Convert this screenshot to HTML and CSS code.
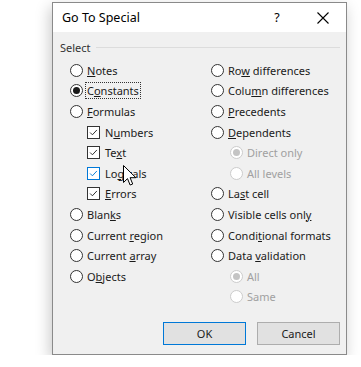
FILE: index.html
```html
<!DOCTYPE html>
<html lang="en">
<head>
    <meta charset="UTF-8">
    <meta name="viewport" content="width=device-width, initial-scale=1.0">
    <title>Go To Special</title>
    <link rel="stylesheet" href="styles.css">
</head>
<body>

    <div class="dialog">
        <div class="title-bar">
            <span class="title">Go To Special</span>
            <span class="help">?</span>
            <span class="close">
                <svg width="12" height="12" viewBox="0 0 12 12"><path d="M0.5 0.5 L11.5 11.5 M11.5 0.5 L0.5 11.5" stroke="#000" stroke-width="1.1" fill="none"/></svg>
            </span>
        </div>

        <div class="dialog-body">
            <div class="group-label"><span>Select</span><span class="group-line"></span></div>

            <div class="columns">
                <div class="column">
                    <div class="row"><span class="radio"></span><span><u>N</u>otes</span></div>
                    <div class="row"><span class="radio checked"></span><span class="focus">C<u>o</u>nstants</span></div>
                    <div class="row"><span class="radio"></span><span><u>F</u>ormulas</span></div>
                    <div class="row sub-check"><span class="check"><svg viewBox="0 0 13 13"><path d="M2.5 6.5 L5.2 9.2 L10.5 3.5" stroke="#222" stroke-width="1.1" fill="none"/></svg></span><span>N<u>u</u>mbers</span></div>
                    <div class="row sub-check"><span class="check"><svg viewBox="0 0 13 13"><path d="M2.5 6.5 L5.2 9.2 L10.5 3.5" stroke="#222" stroke-width="1.1" fill="none"/></svg></span><span>Te<u>x</u>t</span></div>
                    <div class="row sub-check"><span class="check hover"><svg viewBox="0 0 13 13"><path d="M2.5 6.5 L5.2 9.2 L10.5 3.5" stroke="#0078d7" stroke-width="1.1" fill="none"/></svg></span><span>Lo<u>g</u>icals</span></div>
                    <div class="row sub-check"><span class="check"><svg viewBox="0 0 13 13"><path d="M2.5 6.5 L5.2 9.2 L10.5 3.5" stroke="#222" stroke-width="1.1" fill="none"/></svg></span><span><u>E</u>rrors</span></div>
                    <div class="row"><span class="radio"></span><span>Blan<u>k</u>s</span></div>
                    <div class="row"><span class="radio"></span><span>Current <u>r</u>egion</span></div>
                    <div class="row"><span class="radio"></span><span>Current <u>a</u>rray</span></div>
                    <div class="row"><span class="radio"></span><span>O<u>b</u>jects</span></div>
                </div>

                <div class="column">
                    <div class="row"><span class="radio"></span><span>Ro<u>w</u> differences</span></div>
                    <div class="row"><span class="radio"></span><span>Colu<u>m</u>n differences</span></div>
                    <div class="row"><span class="radio"></span><span><u>P</u>recedents</span></div>
                    <div class="row"><span class="radio"></span><span><u>D</u>ependents</span></div>
                    <div class="row sub-radio disabled"><span class="radio checked"></span><span>Direct only</span></div>
                    <div class="row sub-radio disabled"><span class="radio"></span><span>All levels</span></div>
                    <div class="row"><span class="radio"></span><span>La<u>s</u>t cell</span></div>
                    <div class="row"><span class="radio"></span><span>Visible cells onl<u>y</u></span></div>
                    <div class="row"><span class="radio"></span><span>Condi<u>t</u>ional formats</span></div>
                    <div class="row"><span class="radio"></span><span>Data <u>v</u>alidation</span></div>
                    <div class="row sub-radio disabled"><span class="radio checked"></span><span>All</span></div>
                    <div class="row sub-radio disabled"><span class="radio"></span><span>Same</span></div>
                </div>
            </div>

            <div class="buttons">
                <button class="btn default">OK</button>
                <button class="btn">Cancel</button>
            </div>
        </div>

        <svg class="cursor" width="14" height="22" viewBox="0 0 14 22">
            <path d="M0.5 0.5 L0.5 17.5 L4.5 13.6 L7.1 20 L9.7 19 L7.1 12.7 L12.8 12.7 Z" fill="#fff" stroke="#000" stroke-width="1" stroke-linejoin="round"/>
        </svg>
    </div>

</body>
</html>
```

FILE: styles.css
```css
body {
    margin: 0;
    background-color: #ffffff;
    font-family: "Noto Sans", "Open Sans", sans-serif;
    font-size: 11px;
    color: #1a1a1a;
}

.dialog {
    position: relative;
    margin: 2px 0 0 52px;
    width: 295px;
    height: 353px;
    box-sizing: border-box;
    border: 1px solid #8a8a8a;
    background-color: #f0f0f0;
    box-shadow: -2px 5px 14px rgba(0,0,0,0.22);
    display: flex;
    flex-direction: column;
}

.title-bar {
    height: 29px;
    background-color: #ffffff;
    display: flex;
    align-items: center;
    padding-left: 9px;
}

.title {
    font-size: 12.5px;
    flex: 1;
    color: #000;
    padding-bottom: 1px;
}

.help {
    font-size: 12.5px;
    width: 46px;
    text-align: center;
    color: #000;
}

.close {
    width: 46px;
    display: flex;
    justify-content: center;
    padding-top: 1px;
}

.dialog-body {
    flex: 1;
    padding: 7px 6px 0 7px;
    display: flex;
    flex-direction: column;
}

.group-label {
    display: flex;
    align-items: center;
    gap: 5px;
    color: #333;
    height: 16px;
}

.group-line {
    flex: 1;
    height: 1px;
    background-color: #dcdcdc;
}

.columns {
    display: flex;
    margin-top: 5px;
    padding-left: 10px;
}

.column {
    display: flex;
    flex-direction: column;
}

.column:first-child {
    width: 141px;
}

.row {
    height: 20.6px;
    display: flex;
    align-items: center;
    gap: 4px;
    white-space: nowrap;
}

u {
    text-decoration-thickness: 1px;
    text-underline-offset: 1px;
}

.radio {
    width: 13px;
    height: 13px;
    box-sizing: border-box;
    border: 1px solid #333;
    border-radius: 50%;
    background-color: #fff;
    display: flex;
    align-items: center;
    justify-content: center;
    flex: none;
}

.radio.checked::after {
    content: "";
    width: 7px;
    height: 7px;
    border-radius: 50%;
    background-color: #1a1a1a;
}

.check {
    width: 13px;
    height: 13px;
    box-sizing: border-box;
    border: 1px solid #333;
    background-color: #fff;
    flex: none;
}

.check svg {
    display: block;
    width: 11px;
    height: 11px;
}

.check.hover {
    border-color: #0078d7;
}

.sub-check {
    padding-left: 17px;
    gap: 5px;
}

.sub-radio {
    padding-left: 19px;
    gap: 4px;
}

.disabled {
    color: #a0a0a0;
}

.disabled .radio {
    border-color: #cccccc;
}

.disabled .radio.checked::after {
    background-color: #c4c4c4;
}

.focus {
    outline: 1px dotted #333;
    outline-offset: 0;
    padding: 0 1px;
    margin-left: -1px;
}

.buttons {
    display: flex;
    justify-content: flex-end;
    gap: 11px;
    margin-top: 15px;
}

.btn {
    width: 83px;
    height: 23px;
    font-family: inherit;
    font-size: 11px;
    background-color: #e1e1e1;
    border: 1px solid #adadad;
    padding: 0;
    color: #1a1a1a;
}

.btn.default {
    border-color: #0078d7;
}

.cursor {
    position: absolute;
    left: 70px;
    top: 162px;
}
```
